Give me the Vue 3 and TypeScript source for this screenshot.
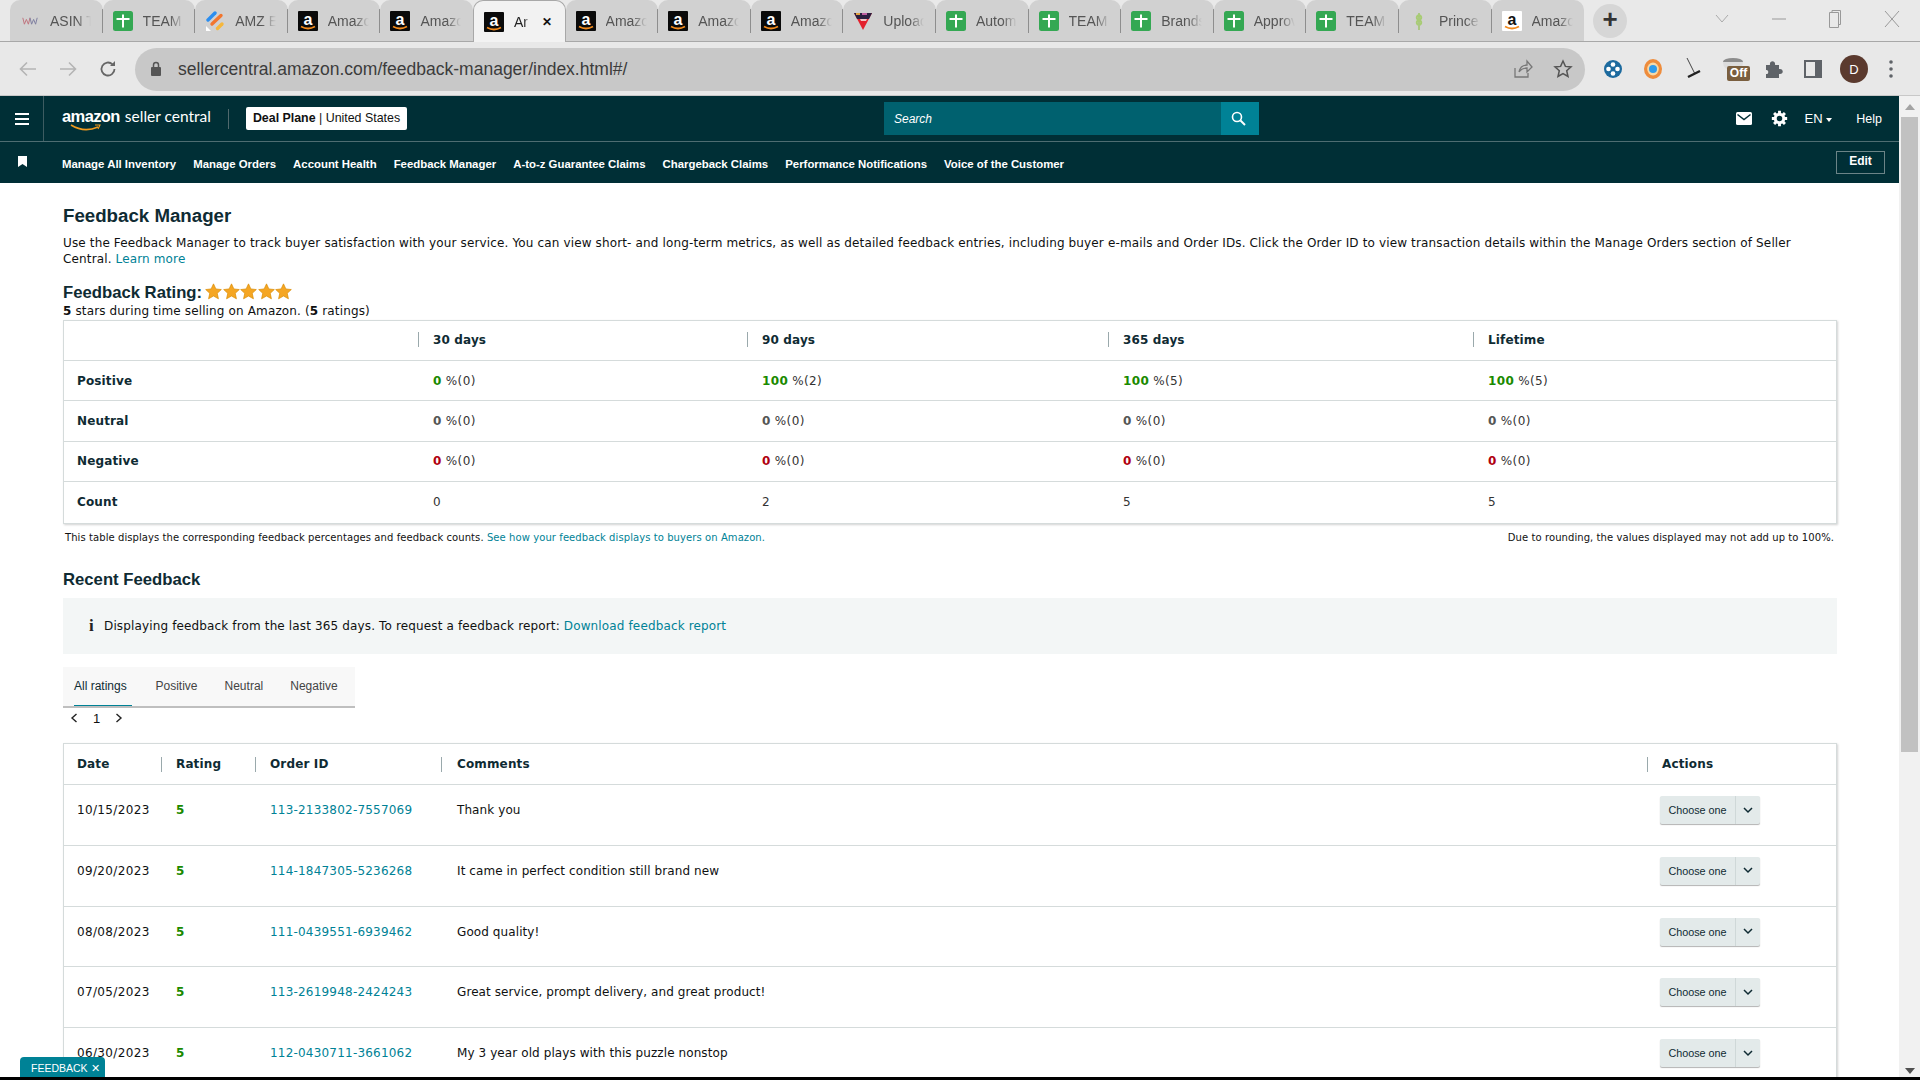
<script setup lang="ts">
type Tab = { label: string; icon: string; active?: boolean; nosep?: boolean }
const tabs: Tab[] = [
  { label: 'ASIN T', icon: 'asin' },
  { label: 'TEAM', icon: 'plus' },
  { label: 'AMZ E', icon: 'amz' },
  { label: 'Amazon', icon: 'a' },
  { label: 'Amazon', icon: 'a', nosep: true },
  { label: 'Ar', icon: 'a', active: true, nosep: true },
  { label: 'Amazon', icon: 'a' },
  { label: 'Amazon', icon: 'a' },
  { label: 'Amazon', icon: 'a' },
  { label: 'Upload', icon: 'up' },
  { label: 'Automa', icon: 'plus' },
  { label: 'TEAM', icon: 'plus' },
  { label: 'Brands', icon: 'plus' },
  { label: 'Approv', icon: 'plus' },
  { label: 'TEAM', icon: 'plus' },
  { label: 'Prince', icon: 'leaf' },
  { label: 'Amazon', icon: 'aw', nosep: true },
]
const nav = ['Manage All Inventory', 'Manage Orders', 'Account Health', 'Feedback Manager', 'A-to-z Guarantee Claims', 'Chargeback Claims', 'Performance Notifications', 'Voice of the Customer']
const metrics = [
  { name: 'Positive', cls: 'green', cells: [['0', '(0)'], ['100', '(2)'], ['100', '(5)'], ['100', '(5)']] },
  { name: 'Neutral', cls: 'grey', cells: [['0', '(0)'], ['0', '(0)'], ['0', '(0)'], ['0', '(0)']] },
  { name: 'Negative', cls: 'red', cells: [['0', '(0)'], ['0', '(0)'], ['0', '(0)'], ['0', '(0)']] },
]
const periods = ['30 days', '90 days', '365 days', 'Lifetime']
const counts = ['0', '2', '5', '5']
const ratingTabs = ['All ratings', 'Positive', 'Neutral', 'Negative']
const feedback = [
  { date: '10/15/2023', id: '113-2133802-7557069', text: 'Thank you' },
  { date: '09/20/2023', id: '114-1847305-5236268', text: 'It came in perfect condition still brand new' },
  { date: '08/08/2023', id: '111-0439551-6939462', text: 'Good quality!' },
  { date: '07/05/2023', id: '113-2619948-2424243', text: 'Great service, prompt delivery, and great product!' },
  { date: '06/30/2023', id: '112-0430711-3661062', text: 'My 3 year old plays with this puzzle nonstop' },
]
</script>

<template>
  <div class="screen">
    <div class="tabstrip">
      <div v-for="(t, i) in tabs" :key="i" class="tab" :class="{ active: t.active, nosep: t.nosep }">
        <svg v-if="t.icon === 'plus'" class="fav" viewBox="0 0 20 20"><rect width="20" height="20" rx="2.500" fill="#34a853"/><path d="M10 3.500v13M3.500 8h13" stroke="#fff" stroke-width="2" fill="none"/></svg>
        <svg v-else-if="t.icon === 'a' || t.icon === 'aw'" class="fav" viewBox="0 0 20 20"><rect width="20" height="20" rx="1" :fill="t.icon === 'a' ? '#0a0a0a' : '#fff'"/><text x="10" y="13.500" text-anchor="middle" font-size="16" font-weight="700" font-family="Liberation Sans" :fill="t.icon === 'a' ? '#fff' : '#111'">a</text><path d="M3 15.500q7 4 14 0" stroke="#f28a1c" stroke-width="1.800" fill="none"/></svg>
        <svg v-else-if="t.icon === 'amz'" class="fav" viewBox="0 0 20 20"><path d="M3 9 10 2" stroke="#2b8ef0" stroke-width="3.400" stroke-linecap="round"/><path d="M7 13 16 4.500" stroke="#f2762e" stroke-width="3.400" stroke-linecap="round"/><path d="M12.500 17.500 17 13" stroke="#f6b73c" stroke-width="3.400" stroke-linecap="round"/><path d="M1 15l5 5H1z" fill="#fff"/></svg>
        <svg v-else-if="t.icon === 'up'" class="fav" viewBox="0 0 20 20"><path d="M1 2h18l-9 17z" fill="#e3202c"/><path d="M1 2h18l-3 6H4z" fill="#2c1f3f"/><rect x="3" y="2" width="4" height="2" fill="#e0a040"/><rect x="9" y="2" width="5" height="2" fill="#c05fa0"/><path d="M7 8h7l-1 2H8z" fill="#f3c6c6"/></svg>
        <svg v-else-if="t.icon === 'leaf'" class="fav" viewBox="0 0 20 20"><path d="M10 2v17" stroke="#9ec36a" stroke-width="1.500"/><path d="M10 4q-4 2-1 5M10 4q4 2 1 5M10 9q-4 2-1 5M10 9q4 2 1 5" stroke="#a8cc74" stroke-width="2" fill="none"/></svg>
        <svg v-else class="fav small" viewBox="0 0 20 20"><path d="M1 6l2 8 2.500-6 2.500 6 2-8" stroke="#c0727c" stroke-width="1.200" fill="none"/><path d="M10 6l2 8 2.500-6 2.500 6 2-8" stroke="#7d7da0" stroke-width="1.200" fill="none"/></svg>
        <span class="tab-label">{{ t.label }}</span>
        <span v-if="t.active" class="tab-x">✕</span>
      </div>
      <div class="newtab"><span>+</span></div>
      <div class="winctl">
        <svg width="16" height="10" viewBox="0 0 16 10"><path d="M2 1l6 7 6-7" stroke="#aaa" fill="none"/></svg>
        <svg width="14" height="2" viewBox="0 0 14 2"><path d="M0 1h14" stroke="#999"/></svg>
        <svg width="14" height="20" viewBox="0 0 14 20"><path d="M1.500 3.500h9v15h-9zM4 3.500v-2h8.500v14h-2" stroke="#999" fill="none"/></svg>
        <svg width="16" height="18" viewBox="0 0 16 18"><path d="M1 1l14 16M15 1 1 17" stroke="#999" fill="none"/></svg>
      </div>
    </div>

    <div class="toolbar">
      <div class="tnav">
        <svg width="20" height="20" viewBox="0 0 20 20"><path d="M18 10H3M9 3.500 2.500 10 9 16.500" stroke="#b4b4b4" stroke-width="1.600" fill="none"/></svg>
        <svg width="20" height="20" viewBox="0 0 20 20"><path d="M2 10h15M11 3.500l6.500 6.500-6.500 6.500" stroke="#b4b4b4" stroke-width="1.600" fill="none"/></svg>
        <svg width="20" height="20" viewBox="0 0 20 20"><path d="M16.500 10a6.500 6.500 0 1 1-2-4.700" stroke="#666" stroke-width="1.800" fill="none"/><path d="M17 2v5h-5z" fill="#666"/></svg>
      </div>
      <div class="omnibox">
        <svg width="12" height="16" viewBox="0 0 12 16"><rect x="1" y="6" width="10" height="9" rx="1" fill="#555"/><path d="M3.500 6V4a2.500 2.500 0 0 1 5 0v2" stroke="#555" stroke-width="1.500" fill="none"/></svg>
        <span class="url">sellercentral.amazon.com/feedback-manager/index.html#/</span>
        <svg class="o-share" width="20" height="20" viewBox="0 0 20 20"><path d="M2 9v9h13v-4M6 13c1-5 4-7 8-7V2l5 6-5 5V9c-3 0-6 1-8 4z" stroke="#777" stroke-width="1.300" fill="none"/></svg>
        <svg width="20" height="20" viewBox="0 0 20 20"><path d="M10 2l2.400 5.400 5.600.5-4.300 3.800 1.300 5.800-5-3-5 3 1.300-5.800L2 7.900l5.600-.5z" stroke="#555" stroke-width="1.500" fill="none"/></svg>
      </div>
      <div class="ext">
        <svg width="20" height="20" viewBox="0 0 20 20"><circle cx="10" cy="10" r="9" fill="#1c6a9e"/><circle cx="10" cy="5.500" r="2.300" fill="#fff"/><circle cx="10" cy="14.500" r="2.300" fill="#fff"/><circle cx="5.500" cy="10" r="2.300" fill="#fff"/><circle cx="14.500" cy="10" r="2.300" fill="#fff"/></svg>
        <svg width="20" height="22" viewBox="0 0 20 22"><ellipse cx="10" cy="11" rx="9" ry="10" fill="#ee8c3c"/><ellipse cx="10" cy="11" rx="5.800" ry="6.500" fill="#f8d9a8"/><circle cx="10" cy="11" r="4" fill="#2f9bea"/></svg>
        <svg width="20" height="24" viewBox="0 0 20 24"><path d="M4 1l7.500 15" stroke="#444" stroke-width="1"/><path d="M5 20l12-6" stroke="#222" stroke-width="2.400"/></svg>
        <div class="off"><span class="cup"></span><span class="off-tag">Off</span></div>
        <svg class="puzzle" width="20" height="20" viewBox="0 0 20 20"><path d="M2 6h4c-1-5 6-5 5 0h4v4c5-1 5 6 0 5v4H2v-4c3 1 3-5 0-4z" fill="#5f6368"/></svg>
        <svg width="18" height="18" viewBox="0 0 18 18"><rect x="1" y="1" width="16" height="16" fill="none" stroke="#5f6368" stroke-width="2"/><rect x="11" y="1" width="6" height="16" fill="#5f6368"/></svg>
        <div class="avatar">D</div>
        <svg width="4" height="18" viewBox="0 0 4 18"><circle cx="2" cy="2" r="1.800" fill="#5f6368"/><circle cx="2" cy="9" r="1.800" fill="#5f6368"/><circle cx="2" cy="16" r="1.800" fill="#5f6368"/></svg>
      </div>
    </div>

    <div class="viewport">
      <div class="page">
        <header class="topbar">
          <div class="burger"><i></i><i></i><i></i></div>
          <div class="logo">
            <span class="logo-a">amazon</span><span class="logo-s">seller central</span>
            <svg class="smile" width="32" height="10" viewBox="0 0 32 10"><path d="M1 1q13 8 27 2" stroke="#f29b1f" stroke-width="1.600" fill="none"/><path d="M25 1h5l-2 4" stroke="#f29b1f" stroke-width="1.100" fill="none"/></svg>
          </div>
          <div class="logo-sep"></div>
          <div class="chip"><b>Deal Plane</b> | United States</div>
          <div class="search">
            <span>Search</span>
            <div class="search-btn"><svg width="15" height="15" viewBox="0 0 15 15"><circle cx="6" cy="6" r="4.500" stroke="#fff" stroke-width="1.600" fill="none"/><path d="M9.500 9.500 14 14" stroke="#fff" stroke-width="2"/></svg></div>
          </div>
          <div class="tright">
            <svg width="16" height="13" viewBox="0 0 16 13"><rect width="16" height="13" rx="1.500" fill="#fff"/><path d="M1.500 2.500 8 7.500l6.500-5" stroke="#002f36" stroke-width="1.500" fill="none"/></svg>
            <svg class="gear" width="17" height="17" viewBox="0 0 20 20"><circle cx="10" cy="10" r="5" fill="none" stroke="#fff" stroke-width="3.500"/><path d="M10 1v4M10 15v4M1 10h4M15 10h4M3.600 3.600l3 3M13.400 13.400l3 3M16.400 3.600l-3 3M6.600 13.400l-3 3" stroke="#fff" stroke-width="3.400"/></svg>
            <span class="lang">EN <i class="caret"></i></span>
            <span class="help">Help</span>
          </div>
        </header>
        <nav class="subnav">
          <svg class="bm" width="9" height="11" viewBox="0 0 9 11"><path d="M0 0h9v11L4.500 8 0 11z" fill="#fff"/></svg>
          <a v-for="n in nav" :key="n">{{ n }}</a>
          <span class="edit">Edit</span>
        </nav>

        <main class="content">
          <h1>Feedback Manager</h1>
          <p class="desc">Use the Feedback Manager to track buyer satisfaction with your service. You can view short- and long-term metrics, as well as detailed feedback entries, including buyer e-mails and Order IDs. Click the Order ID to view transaction details within the Manage Orders section of Seller Central. <a>Learn more</a></p>
          <div class="rating">
            <h2>Feedback Rating:</h2>
            <svg v-for="s in 5" :key="s" width="17" height="17" viewBox="0 0 20 20"><path d="M10 1l2.800 6 6.400.7-4.800 4.400 1.400 6.500L10 15.300l-5.800 3.300 1.400-6.500L.8 7.700 7.200 7z" fill="#f5a623" stroke="#d98a00" stroke-width=".8"/></svg>
          </div>
          <p class="stars"><b>5</b> stars during time selling on Amazon. (<b>5</b> ratings)</p>

          <div class="card metrics">
            <div class="mrow mhead">
              <div class="mname"></div>
              <div v-for="p in periods" :key="p" class="mcell"><b>{{ p }}</b></div>
            </div>
            <div v-for="m in metrics" :key="m.name" class="mrow">
              <div class="mname"><b>{{ m.name }}</b></div>
              <div v-for="(c, i) in m.cells" :key="i" class="mcell"><b :class="m.cls">{{ c[0] }}</b> %{{ c[1] }}</div>
            </div>
            <div class="mrow">
              <div class="mname"><b>Count</b></div>
              <div v-for="(c, i) in counts" :key="i" class="mcell">{{ c }}</div>
            </div>
          </div>
          <div class="note">
            <span>This table displays the corresponding feedback percentages and feedback counts. <a>See how your feedback displays to buyers on Amazon.</a></span>
            <span>Due to rounding, the values displayed may not add up to 100%.</span>
          </div>

          <h3>Recent Feedback</h3>
          <div class="info"><span class="i">i</span>Displaying feedback from the last 365 days. To request a feedback report:&nbsp;<a>Download feedback report</a></div>

          <div class="rtabs">
            <span v-for="(r, i) in ratingTabs" :key="r" class="rtab" :class="{ on: i === 0 }">{{ r }}</span>
          </div>
          <div class="pager">
            <svg width="8" height="10" viewBox="0 0 8 10"><path d="M6.500 1 2 5l4.500 4" stroke="#222" stroke-width="1.400" fill="none"/></svg>
            <span>1</span>
            <svg width="8" height="10" viewBox="0 0 8 10"><path d="M1.500 1 6 5 1.500 9" stroke="#222" stroke-width="1.400" fill="none"/></svg>
          </div>

          <div class="card fb">
            <div class="frow fhead">
              <div class="c-date"><b>Date</b></div>
              <div class="c-rate"><b>Rating</b></div>
              <div class="c-id"><b>Order ID</b></div>
              <div class="c-com"><b>Comments</b></div>
              <div class="c-act"><b>Actions</b></div>
            </div>
            <div v-for="f in feedback" :key="f.id" class="frow">
              <div class="c-date">{{ f.date }}</div>
              <div class="c-rate"><b class="green">5</b></div>
              <div class="c-id"><a>{{ f.id }}</a></div>
              <div class="c-com">{{ f.text }}</div>
              <div class="c-act">
                <div class="choose">
                  <span class="ch-l">Choose one</span>
                  <span class="ch-r"><svg width="10" height="7" viewBox="0 0 10 7"><path d="M1 1l4 4 4-4" stroke="#0f2b33" stroke-width="1.500" fill="none"/></svg></span>
                </div>
              </div>
            </div>
          </div>
        </main>
      </div>
      <aside class="scrollbar">
        <i class="up"></i>
        <div class="thumb"></div>
        <i class="down"></i>
      </aside>
      <div class="feedback-tag">FEEDBACK <span>✕</span></div>
    </div>
    <div class="blackbar"></div>
  </div>
</template>

<style>
html, body { margin: 0; padding: 0; overflow: hidden; background: #fff; }
</style>

<style scoped>
.screen { width: 1920px; height: 1080px; display: flex; flex-direction: column; overflow: hidden; font-family: "DejaVu Sans", sans-serif; color: #0f1111; }
a { color: #008296; }
b { font-weight: 700; }

.tabstrip { height: 41px; flex: none; display: flex; align-items: stretch; padding-left: 10px; background: #e9e9e9; border-bottom: 1px solid #a8a8a8; }
.tab { width: 92.6px; box-sizing: border-box; display: flex; align-items: center; gap: 10px; padding-left: 10px; background: #d1d1d1; border-radius: 10px 10px 0 0; font-family: "Liberation Sans", sans-serif; font-size: 14px; color: #555; overflow: hidden; white-space: nowrap; position: relative; }
.tab::after { content: ""; position: absolute; right: 0; top: 9px; height: 24px; width: 1px; background: #8e8e8e; }
.tab.nosep::after { display: none; }
.tab.active { background: #f2f2f2; border: 1px solid #a8a8a8; border-bottom: none; color: #222; height: 42px; }
.fav { width: 20px; height: 20px; flex: none; }
.fav.small { width: 16px; height: 16px; margin: 0 2px; }
.tab-label { flex: none; width: 41px; overflow: hidden; -webkit-mask-image: linear-gradient(90deg, #000 65%, transparent 100%); mask-image: linear-gradient(90deg, #000 65%, transparent 100%); }
.active .tab-label { width: 16px; }
.tab-x { font-size: 12px; font-weight: 700; color: #111; margin-left: 2px; }
.newtab { width: 34px; height: 34px; margin: 4px 0 0 9px; background: #d6d6d6; border-radius: 50%; display: flex; align-items: center; justify-content: center; font: 700 26px "Liberation Sans", sans-serif; color: #333; }
.newtab span { margin-top: -3px; }
.winctl { flex: 1; display: flex; align-items: center; justify-content: flex-end; gap: 42px; padding: 0 20px 3px 0; }

.toolbar { flex: none; display: flex; align-items: center; background: #e8e8e8; border-bottom: 1px solid #c8c8c8; padding-top: 1px; box-sizing: border-box; height: 54px; }
.tnav { width: 135px; flex: none; display: flex; align-items: center; gap: 20px; padding-left: 18px; box-sizing: border-box; }
.omnibox { width: 1450px; height: 43px; flex: none; box-sizing: border-box; display: flex; align-items: center; background: #c8c8c8; border-radius: 22px; padding: 0 12px 0 15px; gap: 14px; }
.url { flex: 1; margin-left: 2px; font: 17.500px "Liberation Sans", sans-serif; color: #3c3c3c; }
.o-share { margin-right: 6px; }
.ext { flex: 1; display: flex; align-items: center; gap: 20px; padding-left: 18px; }
.off { width: 26px; height: 30px; position: relative; }
.puzzle { margin-left: -5px; }
.cup { position: absolute; left: 0; top: 4px; width: 20px; height: 12px; background: linear-gradient(#8c8c8c 0 4px, #dcdcdc 4px); border-radius: 50% 50% 40% 40% / 30% 30% 60% 60%; }
.off-tag { position: absolute; left: 4px; top: 12px; width: 23px; height: 15px; box-sizing: border-box; border-radius: 2px; background: #7a5f3f; color: #fff; font: 700 12px/15px "Liberation Sans", sans-serif; text-align: center; }
.avatar { width: 28px; height: 28px; border-radius: 50%; background: #5b3a2e; color: #fff; font: 13px "Liberation Sans", sans-serif; display: flex; align-items: center; justify-content: center; margin: 0 1px 0 -2px; }

.viewport { flex: 1; min-height: 0; display: flex; position: relative; }
.page { flex: 1; min-width: 0; overflow: hidden; }
.topbar { height: 46px; box-sizing: border-box; background: #002f36; display: flex; align-items: center; color: #fff; border-bottom: 1px solid #4e6d72; font-family: "Liberation Sans", sans-serif; }
.burger { width: 44px; height: 45px; box-sizing: border-box; border-right: 1px solid #3d5c61; display: flex; flex-direction: column; justify-content: center; align-items: center; gap: 3px; flex: none; }
.burger i { width: 14px; height: 2px; background: #fff; display: block; }
.logo { margin-left: 18px; position: relative; width: 150px; flex: none; white-space: nowrap; margin-top: -4px; }
.logo-a { font-weight: 700; font-size: 16.500px; letter-spacing: -.6px; }
.logo-s { font: 400 15.500px "Lato", sans-serif; margin-left: 5px; }
.smile { position: absolute; left: 8px; top: 17px; }
.logo-sep { width: 1px; height: 20px; background: #50696d; margin-left: 16px; flex: none; }
.chip { margin-left: 17px; width: 161px; height: 23px; box-sizing: border-box; background: #fff; color: #0f1111; border-radius: 2px; font-size: 12.400px; line-height: 23px; text-align: center; flex: none; white-space: nowrap; }
.search { margin-left: 477px; width: 375px; height: 33px; background: #00616f; display: flex; align-items: center; justify-content: space-between; flex: none; font: italic 12px "Liberation Sans", sans-serif; padding-left: 10px; box-sizing: border-box; }
.search-btn { width: 38px; height: 33px; box-sizing: border-box; padding-right: 3px; background: #008296; display: flex; align-items: center; justify-content: center; }
.tright { flex: 1; display: flex; align-items: center; justify-content: flex-end; padding-right: 17px; font-size: 13px; }
.gear { margin-left: 19px; }
.lang { margin-left: 17px; }
.caret { display: inline-block; border: 3.500px solid transparent; border-top: 4px solid #fff; border-bottom: none; vertical-align: middle; }
.help { margin-left: 24px; font-size: 12.500px; }

.subnav { height: 41px; box-sizing: border-box; padding-top: 2px; background: #002f36; display: flex; align-items: center; gap: 17px; color: #fff; font: 700 11.400px "Liberation Sans", sans-serif; padding-left: 18px; position: relative; }
.subnav a { color: #fff; white-space: nowrap; }
.bm { margin-right: 18px; margin-top: -4px; flex: none; }
.edit { position: absolute; right: 14px; top: 9px; width: 49px; height: 23px; box-sizing: border-box; border: 1px solid #6b8487; text-align: center; line-height: 19px; font-size: 12px; }

.content { padding: 21px 62px 0 63px; width: 1899px; box-sizing: border-box; font-size: 12px; letter-spacing: .14px; }
h1 { margin: 0; font: 700 18.700px/24px "Liberation Sans", sans-serif; letter-spacing: 0; color: #0f2b33; }
.desc { margin: 7px 0 0; line-height: 16px; color: #0f1111; }
.rating { display: flex; align-items: center; margin-top: 15px; height: 22px; }
h2 { margin: 0 3px 0 0; font: 700 16.700px/22px "Liberation Sans", sans-serif; letter-spacing: 0; color: #0f2b33; }
.rating svg { margin-right: 0.500px; margin-top: -3px; }
.stars { margin: -1px 0 0; line-height: 16px; }

.card { background: #fff; border: 1px solid #d5dbdb; box-shadow: 1px 1px 2px rgba(0, 0, 0, .18); }
.metrics { margin-top: 1px; }
.mrow { height: 40.400px; box-sizing: border-box; display: grid; grid-template-columns: 354px 329px 361px 365px 1fr; align-items: center; border-bottom: 1px solid #d5dbdb; color: #333; }
.mrow:last-child { border-bottom: none; }
.mname { padding-left: 13px; color: #0f2b33; }
.mcell { padding-left: 15px; letter-spacing: .35px; }
.mhead .mcell { position: relative; color: #0f2b33; letter-spacing: .14px; }
.mhead { height: 40px; padding-bottom: 2px; }
.mhead .mcell::before { content: ""; position: absolute; left: 0; top: 0; bottom: 0; margin: auto; height: 15px; width: 1px; background: #9aa9ac; }
.green { color: #1a8a00; }
.grey { color: #555; }
.red { color: #b0000f; }

.note { display: flex; justify-content: space-between; padding: 8.500px 3px 0 2px; font-size: 10px; letter-spacing: .08px; line-height: 12px; color: #111; }
h3 { margin: 24px 0 0; font: 700 16.700px/24px "Liberation Sans", sans-serif; letter-spacing: 0; color: #0f2b33; }
.info { margin-top: 6px; height: 56px; background: #f3f6f6; display: flex; align-items: center; padding-left: 26px; }
.i { font: 700 17px "Liberation Serif", serif; margin-right: 9px; color: #222; width: 6px; }
.rtabs { margin-top: 13px; width: 292px; height: 41px; box-sizing: border-box; background: #f8f8f8; border-bottom: 2px solid #bfbfbf; display: flex; padding-left: 11px; gap: 27px; font: 12px "Liberation Sans", sans-serif; letter-spacing: 0; color: #444; }
.rtab { line-height: 38px; height: 39px; box-sizing: border-box; white-space: nowrap; }
.rtab.on { color: #0f2b33; border-bottom: 1px solid #008296; width: 58px; margin-right: -3.500px; }
.pager { height: 20px; display: flex; align-items: center; gap: 15px; padding-left: 7px; font: 13px "Liberation Sans", sans-serif; }
.fb { margin-top: 15px; }
.frow { height: 60.750px; box-sizing: border-box; display: grid; grid-template-columns: 97px 94px 186px 1206px 1fr; align-items: start; border-bottom: 1px solid #d5dbdb; padding-top: 15px; line-height: 20px; }
.frow > div { padding-left: 15px; }
.frow > .c-date { padding-left: 13px; letter-spacing: .35px; }
.frow > .c-id { letter-spacing: .2px; }
.frow > .c-com { padding-left: 16px; letter-spacing: .09px; }
.fhead { height: 41px; color: #0f2b33; padding-top: 0; align-items: center; }
.fhead > div { letter-spacing: .14px !important; }
.fhead > div:not(.c-date) { position: relative; }
.fhead > div:not(.c-date)::before { content: ""; position: absolute; left: 0; top: 0; bottom: 0; margin: auto; height: 15px; width: 1px; background: #9aa9ac; }
.frow > .c-act { padding-left: 13px; }
.fhead > .c-act { padding-left: 15px; }
.choose { width: 100px; height: 28px; display: flex; background: #e3eaea; border-radius: 2px; box-shadow: 0 1px 1px rgba(0, 0, 0, .3); font: 10.800px "Liberation Sans", sans-serif; letter-spacing: 0; color: #0f2b33; margin-top: -4px; }
.ch-l { width: 75px; text-align: center; line-height: 28px; border-right: 1px solid #cfd8d8; }
.ch-r { flex: 1; display: flex; align-items: center; justify-content: center; }

.scrollbar { width: 21px; flex: none; background: #f1f1f1; position: relative; display: flex; flex-direction: column; align-items: center; }
.up { margin-top: 8px; border: 5px solid transparent; border-bottom: 6px solid #a3a3a3; border-top: none; }
.thumb { margin-top: 7px; width: 17px; flex: 0 0 635px; background: #c1c1c1; }
.down { position: absolute; bottom: 3px; border: 5px solid transparent; border-top: 6px solid #505050; border-bottom: none; }
.feedback-tag { position: absolute; left: 20px; bottom: 0; width: 85px; height: 20px; box-sizing: border-box; background: #008296; border-radius: 4px 4px 0 0; color: #fff; font: 10.500px/22px "Liberation Sans", sans-serif; padding-left: 11px; white-space: nowrap; }
.blackbar { height: 3px; flex: none; background: #000; }
</style>
